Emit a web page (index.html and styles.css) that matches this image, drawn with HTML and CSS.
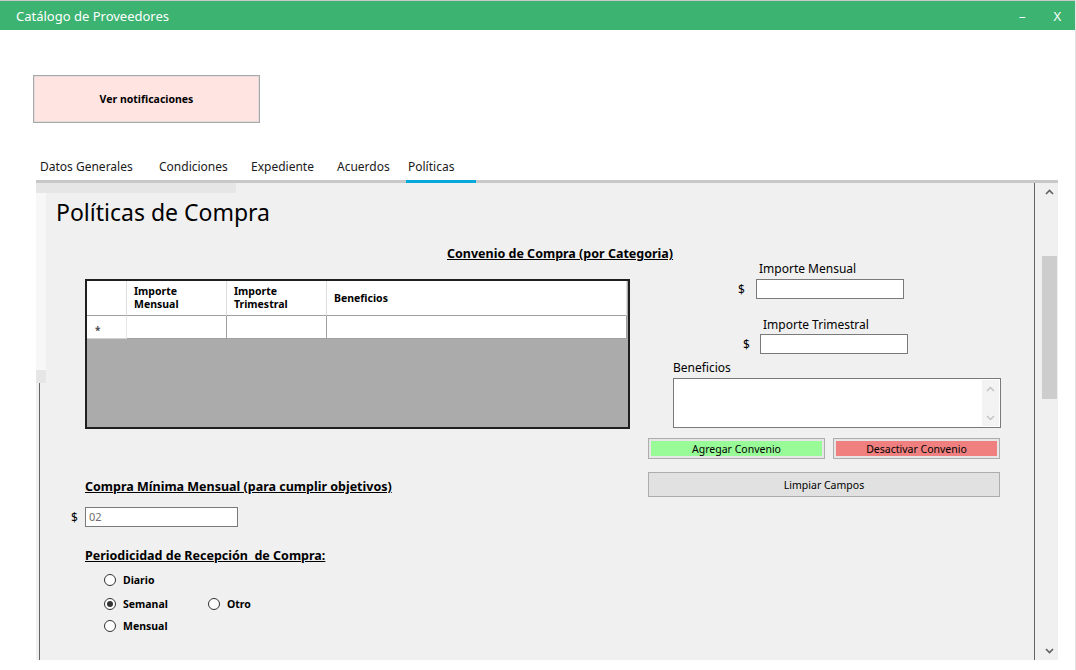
FILE: index.html
```html
<!DOCTYPE html>
<html lang="es">
<head>
<meta charset="utf-8">
<title>Catálogo de Proveedores</title>
<link rel="stylesheet" href="styles.css">
</head>
<body>
<div class="window">
  <header class="titlebar">
    <span class="title">Catálogo de Proveedores</span>
    <span class="ctl ctl-min">–</span>
    <span class="ctl ctl-close">X</span>
  </header>

  <main class="client">
    <button class="notif-btn">Ver notificaciones</button>

    <nav class="tabstrip">
      <span class="tab tab-1">Datos Generales</span>
      <span class="tab tab-2">Condiciones</span>
      <span class="tab tab-3">Expediente</span>
      <span class="tab tab-4">Acuerdos</span>
      <span class="tab tab-5 active">Políticas</span>
    </nav>

    <section class="panel">
      <div class="page">
        <h1 class="page-title">Políticas de Compra</h1>
        <h2 class="section-head convenio-head">Convenio de Compra (por Categoria)</h2>

        <div class="columns">
          <div class="col-left">
            <div class="grid">
              <div class="grid-row grid-header">
                <div class="cell rowhead"></div>
                <div class="cell c1">Importe<br>Mensual</div>
                <div class="cell c2">Importe<br>Trimestral</div>
                <div class="cell c3">Beneficios</div>
              </div>
              <div class="grid-row grid-data">
                <div class="cell rowhead"><span class="star">*</span></div>
                <div class="cell c1"></div>
                <div class="cell c2"></div>
                <div class="cell c3"></div>
              </div>
            </div>

            <h2 class="section-head compra-head">Compra Mínima Mensual (para cumplir objetivos)</h2>
            <div class="money-row min-row">
              <span class="dollar">$</span>
              <div class="input min-input">02</div>
            </div>

            <h2 class="section-head period-head">Periodicidad de Recepción&nbsp; de Compra:</h2>
            <div class="radios">
              <div class="radio-row row-a">
                <span class="radio"></span><span class="radio-label">Diario</span>
              </div>
              <div class="radio-row row-b">
                <span class="radio checked"></span><span class="radio-label semanal">Semanal</span>
                <span class="radio"></span><span class="radio-label">Otro</span>
              </div>
              <div class="radio-row">
                <span class="radio"></span><span class="radio-label">Mensual</span>
              </div>
            </div>
          </div>

          <div class="col-right">
            <div class="field-label lbl-mensual">Importe Mensual</div>
            <div class="money-row row-mensual">
              <span class="dollar">$</span>
              <div class="input amount-input"></div>
            </div>
            <div class="field-label lbl-trimestral">Importe Trimestral</div>
            <div class="money-row row-trimestral">
              <span class="dollar">$</span>
              <div class="input amount-input"></div>
            </div>
            <div class="field-label lbl-beneficios">Beneficios</div>
            <div class="textarea">
              <div class="ta-scroll">
                <svg width="9" height="6" viewBox="0 0 9 6"><path d="M1 5 L4.5 1.5 L8 5" fill="none" stroke="#c4c4c4" stroke-width="1.5"/></svg>
                <svg width="9" height="6" viewBox="0 0 9 6"><path d="M1 1 L4.5 4.5 L8 1" fill="none" stroke="#c4c4c4" stroke-width="1.5"/></svg>
              </div>
            </div>
            <div class="btn-row">
              <button class="btn btn-add">Agregar Convenio</button>
              <button class="btn btn-off">Desactivar Convenio</button>
            </div>
            <button class="btn btn-clear">Limpiar Campos</button>
          </div>
        </div>
      </div>

      <div class="vscroll">
        <svg class="arrow" width="9" height="6" viewBox="0 0 9 6"><path d="M1 5 L4.5 1.5 L8 5" fill="none" stroke="#606060" stroke-width="1.6"/></svg>
        <div class="thumb-track"><div class="thumb"></div></div>
        <svg class="arrow" width="9" height="6" viewBox="0 0 9 6"><path d="M1 1 L4.5 4.5 L8 1" fill="none" stroke="#606060" stroke-width="1.6"/></svg>
      </div>
    </section>
  </main>
</div>
</body>
</html>
```

FILE: styles.css
```css
* { box-sizing: border-box; }

html, body {
  margin: 0;
  padding: 0;
  background: #ffffff;
}

body {
  font-family: "Noto Sans", "Open Sans", sans-serif;
  color: #000;
  width: 1076px;
  height: 670px;
  overflow: hidden;
}

.window {
  width: 1076px;
  height: 670px;
  border-right: 1px solid #e3e3e3;
}

/* ---------- title bar ---------- */
.titlebar {
  height: 30px;
  border-top: 1px solid #c9c9c9;
  background: #3cb371;
  color: #fff;
  display: flex;
  align-items: center;
  padding-left: 16px;
}

.title {
  font-size: 13px;
  flex: 1;
}

.ctl {
  font-size: 13px;
  color: #fff;
}

.ctl-min { margin-right: 28px; }
.ctl-close { margin-right: 14px; }

/* ---------- client ---------- */
.client {
  padding-top: 45px;
}

.notif-btn {
  display: block;
  margin: 0 0 0 33px;
  width: 227px;
  height: 48px;
  background: #ffe4e1;
  border: 1px solid #a8a8a8;
  box-shadow: inset 0 0 0 1px #e4dcdb;
  font-family: inherit;
  font-size: 10.5px;
  font-weight: 700;
  color: #000;
  padding: 0;
}

/* ---------- tabs ---------- */
.tabstrip {
  margin: 32px 0 0 36px;
  width: 1022px;
  height: 28px;
  border-bottom: 3px solid #c8c8c8;
  display: flex;
  padding-left: 4px;
  font-size: 12px;
  color: #1a1a1a;
}

.tab {
  height: 25px;
  padding-top: 3px;
  line-height: 18px;
  white-space: nowrap;
}

.tab-1 { width: 119px; }
.tab-2 { width: 92px; }
.tab-3 { width: 86px; }
.tab-4 { width: 69px; }
.tab-5 { width: 70px; padding-left: 2px; }

.tab.active {
  height: 28px;
  border-bottom: 3px solid #07a9dc;
}

/* ---------- panel ---------- */
.panel {
  margin-left: 36px;
  width: 1022px;
  height: 477px;
  display: flex;
  background: #f0f0f0;
}

.page {
  width: 999px;
  height: 477px;
  border-right: 1px solid #646464;
  background:
    linear-gradient(#e6e6e6, #e6e6e6) 0 0 / 200px 10px no-repeat,
    linear-gradient(#f7f7f7, #f7f7f7) 0 10px / 10px 177px no-repeat,
    linear-gradient(#e6e6e6, #e6e6e6) 0 187px / 10px 13px no-repeat,
    linear-gradient(#646464, #646464) 3px 200px / 1px 277px no-repeat,
    #f0f0f0;
}

.page-title {
  margin: 14px 0 0 20px;
  font-size: 23px;
  font-weight: 400;
  line-height: 30px;
  color: #000;
}

.section-head {
  margin: 0;
  font-size: 12.5px;
  font-weight: 700;
  line-height: 16px;
  text-decoration: underline;
  color: #000;
  white-space: nowrap;
}

.convenio-head {
  margin: 19px 0 0 411px;
}

.columns {
  display: flex;
  gap: 18px;
  margin-left: 49px;
}

/* ---------- left column ---------- */
.col-left {
  width: 545px;
}

.grid {
  margin-top: 17px;
  width: 545px;
  height: 150px;
  border: 2px solid #1f1f1f;
  background: #ababab;
}

.grid-row {
  display: flex;
}

.cell {
  background: #fff;
  font-size: 10.5px;
  font-weight: 700;
  line-height: 13px;
}

.rowhead { width: 40px; }
.c1, .c2 { width: 100px; }
.c3 { width: 300px; }

.grid-header {
  height: 35px;
}

.grid-header .cell {
  height: 35px;
  border-bottom: 1px solid #a0a0a0;
  border-right: 1px solid #dedede;
  padding-left: 7px;
  display: flex;
  align-items: center;
}

.grid-data {
  height: 23px;
}

.grid-data .cell {
  height: 23px;
  border-bottom: 1px solid #a0a0a0;
  border-right: 1px solid #a0a0a0;
}

.grid-data .rowhead {
  border-right: 1px solid #e6e6e6;
  border-bottom: 1px solid #d0d0d0;
  padding: 8px 0 0 8px;
}

.star {
  font-size: 10px;
  line-height: 10px;
  color: #4a4a4a;
}

.compra-head {
  margin-top: 50px;
}

.money-row {
  display: flex;
  align-items: center;
  height: 20px;
}

.dollar {
  font-size: 12px;
  color: #000;
}

.input {
  height: 20px;
  background: #fff;
  border: 1px solid #7a7a7a;
}

.min-row {
  margin: 12px 0 0 -14px;
}

.min-row .dollar { width: 14px; }

.min-input {
  width: 153px;
  font-size: 11px;
  color: #6d6d6d;
  line-height: 18px;
  padding-left: 3px;
}

.period-head {
  margin-top: 21px;
}

.radios {
  margin: 8px 0 0 19px;
}

.radio-row {
  display: flex;
  align-items: center;
  height: 16px;
  margin-bottom: 6px;
}

.radio-row.row-a { margin-bottom: 8px; }

.radio {
  width: 12px;
  height: 12px;
  border: 1px solid #333;
  border-radius: 50%;
  background: #fff;
  display: flex;
  align-items: center;
  justify-content: center;
}

.radio.checked::after {
  content: "";
  width: 6px;
  height: 6px;
  border-radius: 50%;
  background: #333;
}

.radio-label {
  margin-left: 7px;
  font-size: 10.5px;
  font-weight: 700;
}

.radio-label.semanal {
  width: 85px;
}

/* ---------- right column ---------- */
.col-right {
  width: 353px;
}

.field-label {
  font-size: 12px;
  line-height: 13px;
  height: 17px;
  color: #000;
}

.lbl-mensual { padding-left: 111px; }
.lbl-trimestral { margin-top: 18px; padding-left: 115px; line-height: 15px; }
.lbl-beneficios { margin-top: 7px; padding-left: 25px; line-height: 14px; }

.row-mensual { padding-left: 90px; }
.row-mensual .dollar { width: 18px; }
.row-trimestral { padding-left: 95px; }
.row-trimestral .dollar { width: 17px; }

.amount-input {
  width: 148px;
}

.textarea {
  margin-left: 25px;
  width: 328px;
  height: 50px;
  background: #fff;
  border: 1px solid #7a7a7a;
  display: flex;
  justify-content: flex-end;
  padding: 1px;
}

.ta-scroll {
  width: 17px;
  background: #f3f3f3;
  display: flex;
  flex-direction: column;
  justify-content: space-between;
  align-items: center;
  padding: 6px 0 5px;
}

.btn-row {
  display: flex;
  gap: 8px;
  margin-top: 10px;
}

.btn {
  font-family: inherit;
  font-size: 10.5px;
  color: #000;
  padding: 0;
  border: 1px solid #adadad;
}

.btn-add {
  width: 177px;
  height: 21px;
  background: #98fb98;
  box-shadow: inset 0 0 0 2px #e6e6e6;
}

.btn-off {
  width: 167px;
  height: 21px;
  background: #f08080;
  box-shadow: inset 0 0 0 2px #e6e6e6;
}

.btn-clear {
  display: block;
  margin-top: 13px;
  width: 352px;
  height: 25px;
  background: #e1e1e1;
}

/* ---------- panel scrollbar ---------- */
.vscroll {
  margin-left: 6px;
  width: 17px;
  height: 477px;
  display: flex;
  flex-direction: column;
  align-items: center;
  padding: 6px 0 6px;
}

.arrow { flex: none; }

.thumb-track {
  flex: 1;
  width: 17px;
  padding: 61px 1px 0;
}

.thumb {
  width: 15px;
  height: 143px;
  background: #cdcdcd;
}
```
